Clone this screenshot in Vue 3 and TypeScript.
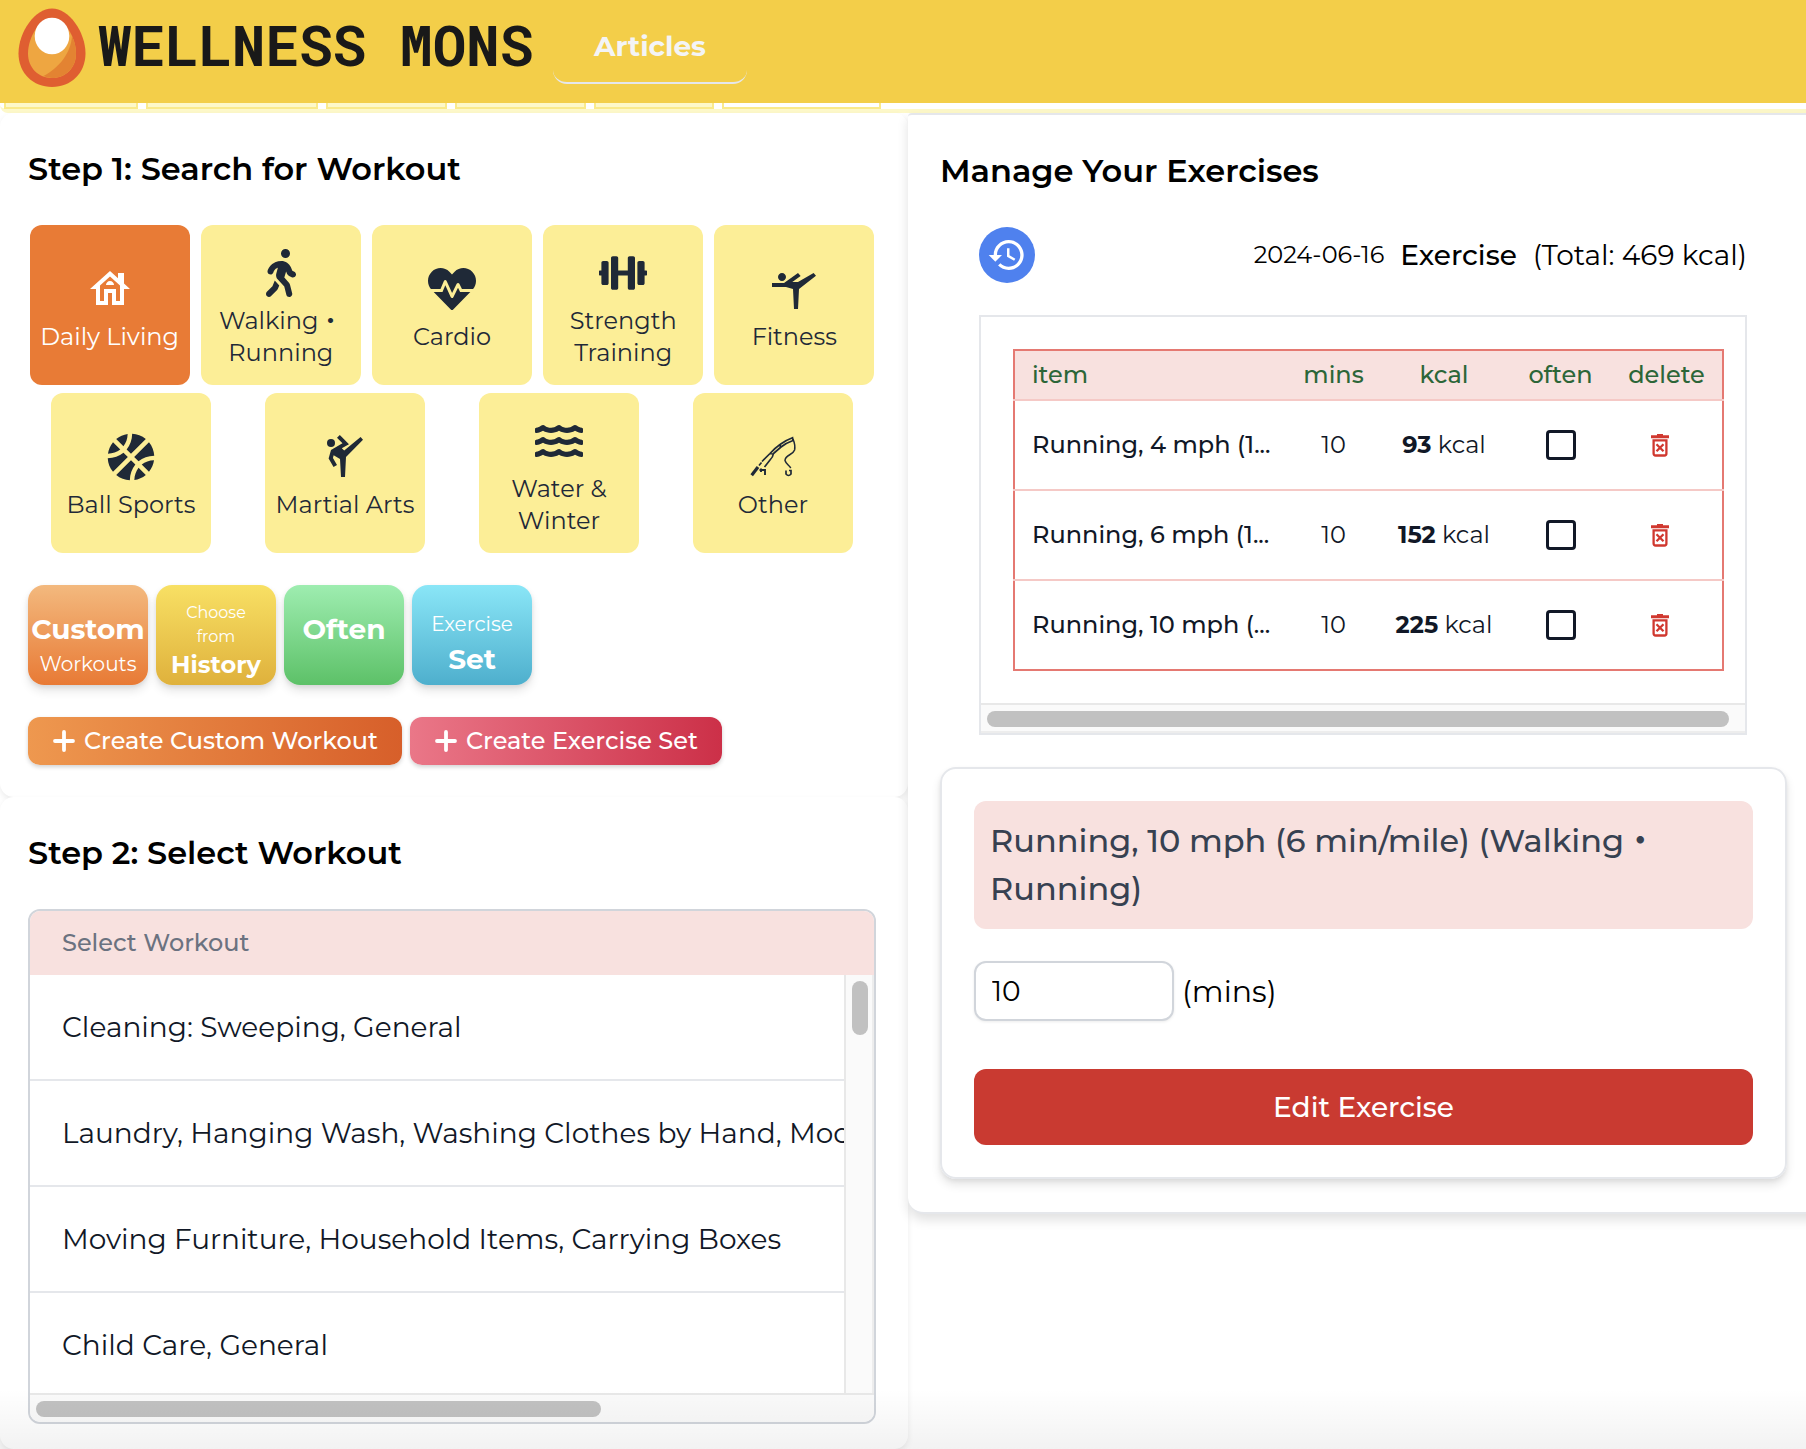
<script setup lang="ts">
import { ref } from 'vue'

interface Shape { box: string; paths: string[] }
interface Category { id: string; lines: string[]; icon: string }

const wave = 'M562.1 383.9c-21.5-2.4-42.1-10.5-57.9-22.9-14.1-11.1-34.2-11.3-48.2 0-37.9 30.4-107.2 30.4-145.7-1.5-13.5-11.2-33-9.1-46.7 1.8-38 30.1-106.9 30-145.2-1.7-13.5-11.2-33.3-8.9-47.1 2-15.5 12.2-36 20.1-57.7 22.4-7.9.8-13.6 7.8-13.6 15.7v32.2c0 9.1 7.6 16.8 16.7 16 28.8-2.5 56.1-11.4 79.4-25.9 56.5 34.6 137 34.1 192 0 56.5 34.6 137 34.1 192 0 23.3 14.2 50.9 23.3 79.1 25.8 9.1.8 16.7-6.9 16.7-16v-31.6c.1-8-5.7-15.4-13.8-16.3z'

const shapes: Record<string, Shape> = {
  house: { box: '0 0 24 24', paths: ['M19 9.3V4h-3v2.6L12 3 2 12h3v8h6v-6h2v6h6v-8h3l-3-2.7zM17 18h-2v-6H9v6H7v-7.81l5-4.5 5 4.5V18z', 'M10 10h4c0-1.1-.9-2-2-2s-2 .9-2 2z'] },
  walk: { box: '0 0 320 512', paths: ['M160 48a48 48 0 1 1 96 0 48 48 0 1 1 -96 0zM126.5 199.3c-1 .4-1.9 .8-2.9 1.2l-8 3.5c-16.4 7.3-29 21.2-34.7 38.2l-2.6 7.8c-5.6 16.8-23.7 25.8-40.5 20.2s-25.8-23.7-20.2-40.5l2.6-7.8c11.4-34.1 36.6-61.9 69.4-76.5l8-3.5c20.8-9.2 43.3-14 66.1-14c44.6 0 84.8 26.8 101.9 67.9L281 232.7l21.4 10.7c15.8 7.9 22.2 27.1 14.3 42.9s-27.1 22.2-42.9 14.3L247 287.3c-10.3-5.2-18.4-13.8-22.8-24.5l-9.6-23-19.3 65.5 49.5 54c5.4 5.9 9.2 13 11.2 20.8l23 92.1c4.3 17.1-6.1 34.5-23.3 38.8s-34.5-6.1-38.8-23.3l-22-88.1-70.7-77.1c-14.8-16.1-20.3-38.6-14.7-59.7l16.9-63.5zM68.7 398l25-62.4c2.1 3 4.5 5.8 7 8.6l40.7 44.4-14.5 36.2c-2.4 6-6 11.5-10.6 16.1L54.6 502.6c-12.5 12.5-32.8 12.5-45.3 0s-12.5-32.8 0-45.3L68.7 398z'] },
  heart: { box: '0 0 512 512', paths: ['M320.2 243.8l-49.7 99.4c-6 12.1-23.4 11.7-28.9-.6l-56.9-126.3-30 71.7H60.6l182.5 186.5c7.1 7.3 18.6 7.3 25.7 0L451.4 288H342.3l-22.1-44.2zM473.7 73.9l-2.4-2.5c-51.5-52.6-135.8-52.6-187.4 0L256 100l-27.9-28.5c-51.5-52.7-135.9-52.7-187.4 0l-2.4 2.4C-10.4 123.7-12.5 203 31 256h102.4l35.9-86.2c5.4-12.9 23.6-13.2 29.4-.4l58.2 129.3 49-97.9c5.9-11.8 22.7-11.8 28.6 0l27.6 55.2H481c43.5-53 41.4-132.3-7.3-182.1z'] },
  dumbbell: { box: '0 0 640 512', paths: ['M104 96H56c-13.3 0-24 10.7-24 24v104H8c-4.4 0-8 3.6-8 8v48c0 4.4 3.6 8 8 8h24v104c0 13.3 10.7 24 24 24h48c13.3 0 24-10.7 24-24V120c0-13.3-10.7-24-24-24zm528 128h-24V120c0-13.3-10.7-24-24-24h-48c-13.3 0-24 10.7-24 24v272c0 13.3 10.7 24 24 24h48c13.3 0 24-10.7 24-24V288h24c4.4 0 8-3.6 8-8v-48c0-4.4-3.6-8-8-8zM456 32h-48c-13.3 0-24 10.7-24 24v168H256V56c0-13.3-10.7-24-24-24h-48c-13.3 0-24 10.7-24 24v400c0 13.3 10.7 24 24 24h48c13.3 0 24-10.7 24-24V288h128v168c0 13.3 10.7 24 24 24h48c13.3 0 24-10.7 24-24V56c0-13.3-10.7-24-24-24z'] },
  gymnast: { box: '0 0 24 24', paths: ['M4 6c0-1.1.9-2 2-2s2 .9 2 2-.9 2-2 2-2-.9-2-2zM1 9h6l7-5 1.31 1.52L11.14 8.5H14L21.8 4 23 5.4 14.5 12 14 22h-2l-.5-10L8 11H1V9z'] },
  ball: { box: '0 0 496 512', paths: ['M212.3 10.3c-43.8 6.3-86.2 24.1-122.2 53.8l77.4 77.4c27.8-35.8 43.3-81.2 44.8-131.2zM248 222L405.9 64.1c-42.4-35-93.6-53.5-145.5-56.1-1.2 63.9-21.5 122.3-58.7 168.7L248 222zM56.1 98.1c-29.7 36-47.5 78.4-53.8 122.2 50-1.5 95.5-17 131.2-44.8L56.1 98.1zm272.2 204.2c45.3-37.1 103.7-57.4 167.7-58.7-2.6-51.9-21.1-103.1-56.1-145.5L282 256l46.3 46.3zM248 290L90.1 447.9c42.4 34.9 93.6 53.5 145.5 56.1 1.3-64 21.6-122.4 58.7-167.7L248 290zm191.9 123.9c29.7-36 47.5-78.4 53.8-122.2-50.1 1.6-95.5 17.1-131.2 44.8l77.4 77.4zM167.7 209.7C122.3 246.9 63.9 267.3 0 268.4c2.6 51.9 21.1 103.1 56.1 145.5L214 256l-46.3-46.3zm116 292c43.8-6.3 86.2-24.1 122.2-53.8l-77.4-77.4c-27.7 35.7-43.2 81.2-44.8 131.2z'] },
  kick: { box: '0 0 24 24', paths: ['M3 5a2 2 0 1 0 4 0a2 2 0 1 0-4 0z', 'M19.8 2l-8.2 6.7-1.21-1.04 3.6-2.08L9.41 1 8 2.41l2.74 2.74L5 8.46l-1.19 4.29L6.27 17 8 16l-2.03-3.52.35-1.3L9.5 13l.5 9h2l.5-10L21 3.4z'] },
  water: { box: '0 0 576 512', paths: [wave, wave.replace('M562.1 383.9', 'M562.1 239.9'), wave.replace('M562.1 383.9', 'M562.1 95.9')] },
}

const rows: Category[][] = [
  [
    { id: 'daily', lines: ['Daily Living'], icon: 'house' },
    { id: 'walking', lines: ['Walking・', 'Running'], icon: 'walk' },
    { id: 'cardio', lines: ['Cardio'], icon: 'heart' },
    { id: 'strength', lines: ['Strength', 'Training'], icon: 'dumbbell' },
    { id: 'fitness', lines: ['Fitness'], icon: 'gymnast' },
  ],
  [
    { id: 'ball', lines: ['Ball Sports'], icon: 'ball' },
    { id: 'martial', lines: ['Martial Arts'], icon: 'kick' },
    { id: 'water', lines: ['Water &', 'Winter'], icon: 'water' },
    { id: 'other', lines: ['Other'], icon: 'rod' },
  ],
]
const selected = ref('daily')

const workouts = [
  'Cleaning: Sweeping, General',
  'Laundry, Hanging Wash, Washing Clothes by Hand, Moderate Effort',
  'Moving Furniture, Household Items, Carrying Boxes',
  'Child Care, General',
]
const exercises = [
  { name: 'Running, 4 mph (1...', mins: 10, kcal: 93 },
  { name: 'Running, 6 mph (1...', mins: 10, kcal: 152 },
  { name: 'Running, 10 mph (...', mins: 10, kcal: 225 },
]
const minutes = ref('10')
</script>

<template>
  <div class="page">
    <header class="topbar">
      <svg class="egg" viewBox="0 0 68 80">
        <path d="M34 .5C51 .5 67.5 24 67.5 45.500C67.500 65 53 79 34 79S.5 65 .5 45.500C.5 24 17 .5 34 .5z" fill="#df5e31" />
        <path d="M34 10C46 10 58 29 58 45.500C58 60 47.500 70 34 70S10 60 10 45.500C10 29 22 10 34 10z" fill="#eea641" />
        <path d="M54 28C57 34 58 40 58 45.500C58 60 47.500 70 34 70C31 70 28 69.300 25.500 68C41 60 53 45 54 28z" fill="#e38332" />
        <ellipse cx="34" cy="28" rx="17.300" ry="18.300" fill="#fff" />
      </svg>
      <span class="brand">WELLNESS MONS</span>
      <a class="nav">Articles</a>
    </header>
    <div class="tabs"><i class="tab a"></i><i class="tab b"></i><i class="tab c"></i><i class="tab d"></i><i class="tab e"></i><i class="tab f"></i></div>

    <main class="columns">
      <div class="left">
        <section class="panel search">
          <h2>Step 1: Search for Workout</h2>
          <div class="grid">
            <div v-for="(row, r) in rows" :key="r" class="tiles">
              <button v-for="c in row" :key="c.id" class="tile" :class="{ on: c.id === selected }" @click="selected = c.id">
                <svg v-if="shapes[c.icon]" class="icon" :viewBox="shapes[c.icon].box"><path v-for="(p, i) in shapes[c.icon].paths" :key="i" :d="p" /></svg>
                <svg v-else class="icon rod" viewBox="0 0 48 48">
                  <path d="M2.700 42.300L9 34" stroke-width="3.200" />
                  <path d="M10 32.500L12.500 29.500M13 28.500L21 20.500Q26 15 31 11.500Q37 7 43.500 4.700L44 7.500Q37 10 32 14L24.500 20.500Q24 24 21 27L15.500 34M31 11.500L31.500 14M21 20.500L24 21" stroke-width="1.700" />
                  <path d="M44 6Q46.500 12 45.600 17C44 22 36 22 36 27.500C37 31 40 32 41.800 35" stroke-width="1.500" />
                  <path d="M37 37.500V41Q39.500 44 42 41V37.500H40" stroke-width="1.700" />
                  <path d="M10.500 37H16V42M12 35.500V39" stroke-width="1.900" />
                </svg>
                <span v-for="l in c.lines" :key="l" class="label">{{ l }}</span>
              </button>
            </div>
          </div>
          <div class="shortcuts">
            <button class="short orange"><b>Custom</b><span class="s20">Workouts</span></button>
            <button class="short yellow"><span class="s16">Choose</span><span class="s16">from</span><b class="s24">History</b></button>
            <button class="short green"><b>Often</b></button>
            <button class="short cyan"><span class="s20">Exercise</span><b>Set</b></button>
          </div>
          <div class="creates">
            <button class="create custom"><svg viewBox="0 0 22 22"><path d="M11 2v18M2 11h18" /></svg><span>Create Custom Workout</span></button>
            <button class="create set"><svg viewBox="0 0 22 22"><path d="M11 2v18M2 11h18" /></svg><span>Create Exercise Set</span></button>
          </div>
        </section>

        <section class="panel select">
          <h2>Step 2: Select Workout</h2>
          <div class="list">
            <div class="list-head">Select Workout</div>
            <div class="list-body">
              <div class="list-rows">
                <div v-for="w in workouts" :key="w" class="list-row">{{ w }}</div>
              </div>
              <div class="vtrack"><div class="vthumb"></div></div>
            </div>
            <div class="htrack"><div class="hthumb"></div></div>
          </div>
        </section>
      </div>

      <section class="manage">
        <h2>Manage Your Exercises</h2>
        <div class="summary">
          <button class="history"><svg viewBox="0 0 24 24"><path d="M13 3c-4.970 0-9 4.030-9 9H1l3.890 3.890.07.14L9 12H6c0-3.870 3.130-7 7-7s7 3.130 7 7-3.130 7-7 7c-1.930 0-3.680-.79-4.940-2.060l-1.420 1.420C8.270 19.990 10.510 21 13 21c4.970 0 9-4.030 9-9s-4.030-9-9-9zm-1 5v5l4.250 2.520.77-1.280-3.520-2.090V8H12z" /></svg></button>
          <span class="date">2024-06-16</span>
          <strong>Exercise</strong>
          <span class="total">(Total: 469 kcal)</span>
        </div>
        <div class="frame">
          <div class="table">
            <div class="tr th"><span class="name">item</span><span>mins</span><span>kcal</span><span>often</span><span>delete</span></div>
            <div v-for="e in exercises" :key="e.kcal" class="tr">
              <span class="name cell">{{ e.name }}</span>
              <span class="cell">{{ e.mins }}</span>
              <span class="cell"><b>{{ e.kcal }}</b> kcal</span>
              <span><i class="check"></i></span>
              <span class="del"><svg viewBox="0 0 18 23"><path d="M6 0h6v1.300h6v3H0v-3h6z" /><path d="M2.600 6.300h12.800v13.200q0 2-2 2h-8.800q-2 0-2-2zM5.500 10.300l7 7M12.500 10.300l-7 7" fill="none" stroke="#d0382f" stroke-width="2.300" /></svg></span>
            </div>
          </div>
          <div class="ftrack"><div class="fthumb"></div></div>
        </div>
        <div class="editor">
          <div class="current">Running, 10 mph (6 min/mile) (Walking・<br />Running)</div>
          <div class="field"><input v-model="minutes" /><span class="unit">(mins)</span></div>
          <button class="save">Edit Exercise</button>
        </div>
      </section>
    </main>
    <div class="fade"></div>
  </div>
</template>

<style>
body { margin: 0; background: #fff; }
</style>

<style scoped>
.page { position: relative; width: 1806px; height: 1449px; overflow: hidden; font-family: Montserrat, Inter, "Noto Sans CJK JP", sans-serif; color: #000; background: #fff; }
.page * { box-sizing: border-box; }
button { font: inherit; border: 0; padding: 0; margin: 0; color: inherit; }
.topbar { height: 103px; background: #f3ce49; display: flex; align-items: flex-start; padding-left: 18px; }
.egg { width: 68px; height: 80px; margin-top: 8px; flex: none; }
.brand { margin-left: 12px; width: 436px; font: bold 56px/89px "Roboto Mono", "DejaVu Sans Mono", monospace; letter-spacing: -0.120px; color: #191919; white-space: nowrap; }
.nav { margin-left: 19px; width: 194px; height: 84px; border-bottom: 2px solid #e5e7eb; border-radius: 14px; display: flex; justify-content: center; font-size: 28px; font-weight: 700; line-height: 92px; color: #f3f4f6; }
.tabs { height: 10px; padding: 0 4px; display: flex; gap: 8px; border-bottom: 4px solid #fdf8c9; border-bottom-left-radius: 8px; }
.tab { height: 6px; background: #fdf8c9; border: 2px solid #faea8b; border-top: 0; }
.a { width: 134px; }
.b { width: 172px; }
.c { width: 121px; }
.d { width: 131px; }
.e { width: 120px; }
.f { width: 159px; background: #fff; }
.columns { display: flex; align-items: flex-start; }
.left { width: 908px; flex: none; }
.panel { background: #fff; border-radius: 14px; box-shadow: 0 3px 6px rgba(0, 0, 0, 0.08); }
h2 { margin: 0; font-size: 32px; font-weight: 600; line-height: 48px; white-space: nowrap; }
.search { height: 684px; padding: 32px 28px 0; }
.grid { margin: 32px -4px 0; display: flex; flex-direction: column; gap: 8px; width: 856px; }
.tiles { display: flex; justify-content: space-around; }
.tile { width: 160px; height: 160px; border-radius: 12px; background: #fcee97; color: #1f2937; padding-top: 7px; display: flex; flex-direction: column; align-items: center; justify-content: center; font-size: 24px; line-height: 32px; }
.tile.on { background: #e87b36; color: #fff; }
.icon { width: 48px; height: 48px; fill: currentColor; margin-bottom: 8px; }
.rod { fill: none; stroke: currentColor; }
.label { white-space: nowrap; height: 32px; }
.shortcuts { margin-top: 32px; display: flex; gap: 8px; }
.short { width: 120px; height: 100px; border-radius: 16px; color: #fff; display: flex; flex-direction: column; align-items: center; justify-content: center; box-shadow: 0 6px 10px rgba(0, 0, 0, 0.1), 0 2px 4px rgba(0, 0, 0, 0.08); }
.short b { font-size: 28px; font-weight: 700; line-height: 36px; }
.short .s24 { font-size: 24px; line-height: 32px; }
.s20 { font-size: 20px; line-height: 32px; }
.s16 { font-size: 16px; line-height: 24px; }
.orange { background: linear-gradient(#f3b97e, #e87a35); padding-top: 20px; gap: 1px; }
.yellow { background: linear-gradient(#f8e064, #dfb13c); padding-top: 12px; }
.green { background: linear-gradient(#9eedb0, #5dc168); padding-bottom: 13px; }
.cyan { background: linear-gradient(#8ae6f7, #4eafcd); padding-top: 15px; gap: 1px; }
.creates { margin-top: 32px; display: flex; gap: 8px; }
.create { height: 48px; border-radius: 12px; color: #fff; display: flex; align-items: center; padding-left: 25px; gap: 9px; font-size: 24px; font-weight: 500; white-space: nowrap; box-shadow: 0 2px 4px rgba(0, 0, 0, 0.18); }
.create span { padding-bottom: 1px; }
.create svg { width: 22px; height: 22px; flex: none; stroke: #fff; stroke-width: 3.800; stroke-linecap: round; }
.custom { width: 374px; background: linear-gradient(90deg, #ee984f, #d75f2a); }
.set { width: 312px; background: linear-gradient(90deg, #ea7788, #cc3048); }
.select { height: 652px; padding: 32px 28px 0; }
.list { margin-top: 32px; width: 848px; height: 515px; border: 2px solid #d1d5db; border-radius: 12px; overflow: hidden; }
.list-head { height: 64px; background: #f8e1df; padding-left: 32px; font-size: 24px; font-weight: 500; line-height: 63px; color: #6b7280; }
.list-body { display: flex; height: 418px; }
.list-rows { width: 814px; overflow: hidden; }
.list-row { height: 106px; border-bottom: 2px solid #e5e7eb; padding-left: 32px; font-size: 28px; line-height: 104px; color: #111827; white-space: nowrap; }
.vtrack { width: 30px; background: #fafafa; border-left: 2px solid #e8e8e8; border-right: 2px solid #ededed; padding: 6px 0 0 6px; }
.vthumb { width: 16px; height: 54px; border-radius: 8px; background: #c1c1c1; }
.htrack { height: 29px; background: #fafafa; border-top: 2px solid #e8e8e8; padding: 6px 0 0 6px; }
.hthumb { width: 565px; height: 16px; border-radius: 8px; background: #c1c1c1; }
.manage { width: 930px; height: 1101px; flex: none; background: #fff; border: 2px solid #e5e7eb; border-left: 0; border-radius: 4px 0 0 16px; padding: 32px 0 0 32px; box-shadow: 0 6px 12px rgba(0, 0, 0, 0.12); position: relative; }
.summary { margin: 32px 0 0 39px; width: 768px; height: 56px; display: flex; align-items: center; white-space: nowrap; }
.history { width: 56px; height: 56px; border-radius: 50%; background: #4f81ee; display: grid; place-items: center; }
.history svg { width: 40px; height: 40px; fill: #fff; }
.date { margin-left: auto; padding-bottom: 1px; font-size: 24px; }
strong { margin-left: 16px; font-size: 28px; font-weight: 500; }
.total { margin-left: 16px; font-size: 28px; }
.frame { margin: 32px 0 0 39px; width: 768px; height: 420px; border: 2px solid #e5e7eb; }
.table { margin: 32px 0 0 32px; width: 711px; height: 322px; border: 2px solid #e57972; font-size: 24px; color: #111827; }
.tr { display: grid; grid-template-columns: 274px 89px 132px 101px 111px; margin: 0 -2px; padding: 0 2px; height: 90px; align-items: center; justify-items: center; border-bottom: 2px solid #f5c9c6; }
.tr:last-child { border-bottom: 0; height: 88px; }
.th { height: 50px; background: #f8e1df; background-clip: content-box; color: #2c6638; font-weight: 500; }
.th span { padding-bottom: 1px; }
.cell { padding-bottom: 2px; }
.name { justify-self: start; padding-left: 17px; font-weight: 500; white-space: nowrap; }
.check { display: block; width: 30px; height: 30px; border: 3px solid #111827; border-radius: 4px; }
.del { padding-right: 14px; display: flex; }
.del svg { width: 18px; height: 23px; fill: #d0382f; }
.ftrack { margin-top: 32px; height: 30px; background: #fafafa; border-top: 2px solid #e8e8e8; padding: 6px; border-bottom: 2px solid #ededed; }
.fthumb { width: 742px; height: 16px; border-radius: 8px; background: #c1c1c1; }
.editor { margin-top: 32px; width: 847px; height: 412px; border: 2px solid #e5e7eb; border-radius: 16px; padding: 32px 32px 0; box-shadow: 0 6px 10px rgba(0, 0, 0, 0.1), 0 2px 4px rgba(0, 0, 0, 0.06); }
.current { width: 779px; height: 128px; border-radius: 12px; background: #f8e1df; padding: 16px; font-size: 32px; line-height: 48px; font-weight: 500; color: #374151; white-space: nowrap; }
.field { margin-top: 32px; display: flex; align-items: center; gap: 8px; font-size: 28px; }
.unit { font-size: 30px; }
input { width: 200px; height: 60px; border: 2px solid #d1d5db; border-radius: 12px; padding: 0 16px; font: inherit; color: #000; outline: 0; box-shadow: 0 1px 3px rgba(0, 0, 0, 0.08); }
.save { margin-top: 48px; width: 779px; height: 76px; border-radius: 12px; background: #c93a31; color: #fff; font-size: 28px; font-weight: 500; }
.fade { position: absolute; left: 0; right: 0; bottom: 0; height: 60px; background: linear-gradient(rgba(0, 0, 0, 0), rgba(0, 0, 0, 0.05)); }
</style>
